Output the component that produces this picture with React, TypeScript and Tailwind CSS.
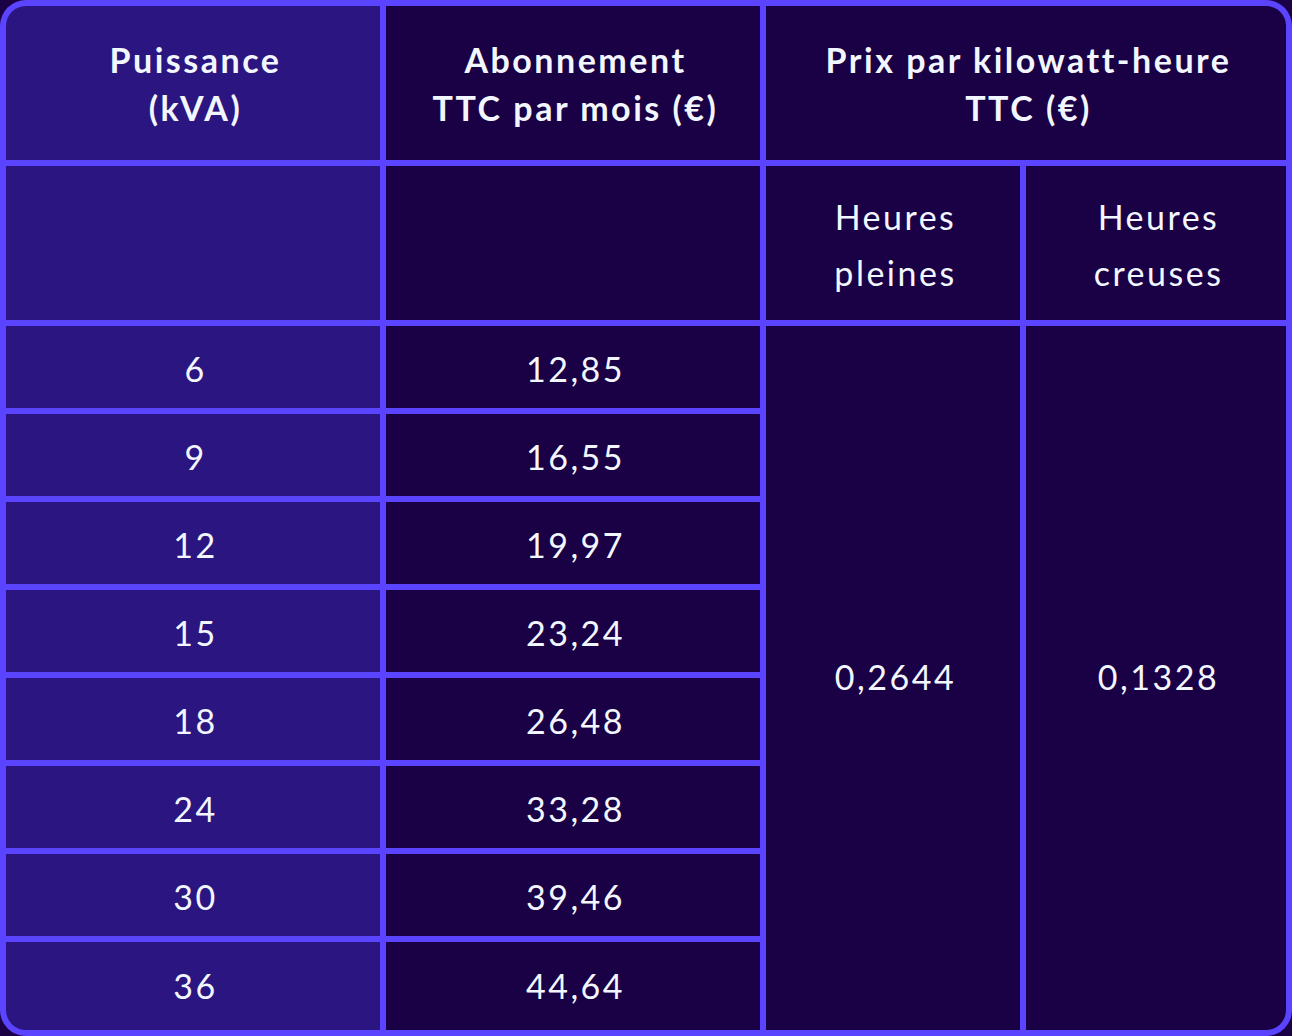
import React from "react";

const light = "bg-[#2b1580]";
const dark = "bg-[#1a0045]";

const rows = [
  ["6", "12,85"],
  ["9", "16,55"],
  ["12", "19,97"],
  ["15", "23,24"],
  ["18", "26,48"],
  ["24", "33,28"],
  ["30", "39,46"],
  ["36", "44,64"],
];

function Cell({
  className = "",
  children,
}: {
  className?: string;
  children?: React.ReactNode;
}) {
  return (
    <div className={`flex items-center justify-center pl-[5px] text-center ${className}`}>
      {children}
    </div>
  );
}

export default function App() {
  return (
    <div
      className="h-[1036px] w-[1292px] bg-[#1a0045] text-[34px] tracking-[2.5px] text-[#f2f7ff]"
      style={{ fontFamily: "Lato, 'Noto Sans', sans-serif" }}
    >
      <div className="grid h-full w-full grid-cols-[374px_374px_254px_1fr] grid-rows-[154px_154px_repeat(7,82px)_1fr] gap-[6px] rounded-[26px] bg-[#5b44ff] p-[6px]">
        <Cell className={`${light} rounded-tl-[20px] pt-[2px] font-bold leading-[48px]`}>
          Puissance
          <br />
          (kVA)
        </Cell>
        <Cell className={`${dark} pt-[2px] font-bold leading-[48px]`}>
          Abonnement
          <br />
          TTC par mois (€)
        </Cell>
        <Cell className={`${dark} col-span-2 rounded-tr-[20px] pt-[2px] font-bold leading-[48px]`}>
          Prix par kilowatt-heure
          <br />
          TTC (€)
        </Cell>

        <Cell className={light} />
        <Cell className={dark} />
        <Cell className={`${dark} pt-[4px] leading-[56px]`}>
          Heures
          <br />
          pleines
        </Cell>
        <Cell className={`${dark} pt-[4px] leading-[56px]`}>
          Heures
          <br />
          creuses
        </Cell>

        {rows.map(([kva, price], i) => {
          const last = i === rows.length - 1;
          return (
            <React.Fragment key={kva}>
              <Cell className={`${light} ${last ? "rounded-bl-[20px] pb-[2px]" : "pt-[2px]"}`}>
                {kva}
              </Cell>
              <Cell className={`${dark} ${last ? "pb-[2px]" : "pt-[2px]"}`}>{price}</Cell>
              {i === 0 && (
                <>
                  <Cell className={`${dark} row-span-8 pb-[3px]`}>0,2644</Cell>
                  <Cell className={`${dark} row-span-8 rounded-br-[20px] pb-[3px]`}>0,1328</Cell>
                </>
              )}
            </React.Fragment>
          );
        })}
      </div>
    </div>
  );
}
